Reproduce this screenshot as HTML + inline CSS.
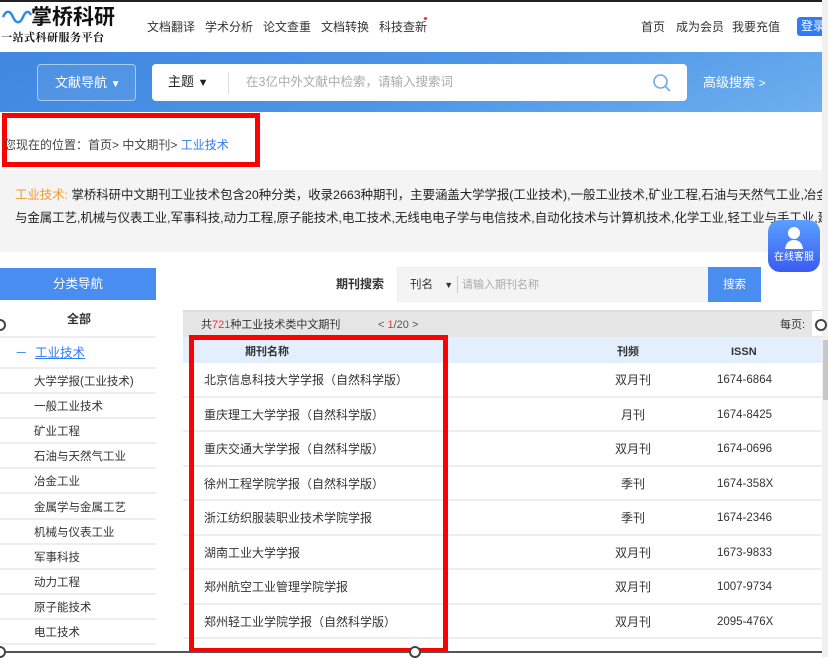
<!DOCTYPE html>
<html><head><meta charset="utf-8"><style>
*{margin:0;padding:0;box-sizing:border-box}
body{width:828px;height:657px;overflow:hidden;position:relative;background:#fff;font-family:"Liberation Sans","Noto Sans CJK SC",sans-serif;font-size:12px;color:#333;line-height:16px}
.a{position:absolute;white-space:nowrap}
.row{position:absolute;left:183px;width:645px;height:34.5px;border-bottom:2px solid #eee}
.row span{position:absolute;top:9px;line-height:16px}
.row .n{left:21px;font-size:12px}
.row .f{left:432px}
.row .i{left:534px;font-size:11.5px}
.sb{position:absolute;left:0;width:156px;height:25px;border-bottom:2px solid #eee}
.sb span{position:absolute;left:34px;top:5px;font-size:11.5px}
.circ{position:absolute;width:12px;height:12px;border:2px solid #444;border-radius:50%;background:#fff}
</style></head><body>
<div class="a" style="left:0;top:0;width:828px;height:2px;background:#222"></div>
<svg class="a" style="left:2px;top:8px" width="30" height="18" viewBox="0 0 30 18"><path d="M1 9c3-7 7-7 10 0s7 7 10 0 6-6 8-2" fill="none" stroke="#2c8be8" stroke-width="2.5"/></svg>
<div class="a" style="left:31px;top:6px;font-size:21px;line-height:24px;font-weight:bold;color:#111">掌桥科研</div>
<div class="a" style="left:1px;top:29px;font-size:11px;font-weight:bold;color:#111;font-family:'Noto Serif CJK SC',serif;letter-spacing:0.5px">一站式科研服务平台</div>
<div class="a" style="left:147px;top:19px">文档翻译</div>
<div class="a" style="left:205px;top:19px">学术分析</div>
<div class="a" style="left:263px;top:19px">论文查重</div>
<div class="a" style="left:321px;top:19px">文档转换</div>
<div class="a" style="left:379px;top:19px">科技查新</div>
<div class="a" style="left:424px;top:17px;width:3px;height:3px;background:#e33;border-radius:50%"></div>
<div class="a" style="left:641px;top:19px">首页</div>
<div class="a" style="left:676px;top:19px">成为会员</div>
<div class="a" style="left:732px;top:19px">我要充值</div>
<div class="a" style="left:797px;top:17px;width:31px;height:19px;background:#2f7cf6;border-radius:3px;color:#fff;padding:1px 0 0 4px">登录</div>
<div class="a" style="left:0;top:52px;width:828px;height:60px;background:linear-gradient(160deg,#3f87e0 0%,#4b94e6 50%,#6eb0ee 100%)"></div>
<div class="a" style="left:37px;top:64px;width:99px;height:37px;border:1px solid #a8ccf2;border-radius:4px;background:rgba(255,255,255,.08);color:#fff;font-size:13px;padding:10px 0 0 17px">文献导航 <span style="font-size:10px">▼</span></div>
<div class="a" style="left:152px;top:64px;width:535px;height:37px;background:#fff;border-radius:4px"></div>
<div class="a" style="left:168px;top:74px;font-size:13px;color:#222">主题 <span style="font-size:11px">▼</span></div>
<div class="a" style="left:228px;top:72px;width:1px;height:22px;background:#ddd"></div>
<div class="a" style="left:246px;top:74px;font-size:12.5px;color:#aaa">在3亿中外文献中检索，请输入搜索词</div>
<svg class="a" style="left:652px;top:73px" width="20" height="20" viewBox="0 0 20 20"><circle cx="8.5" cy="8.5" r="6.5" fill="none" stroke="#6ea8ee" stroke-width="1.6"/><path d="M13 13l5 5" stroke="#6ea8ee" stroke-width="1.6"/></svg>
<div class="a" style="left:703px;top:75px;font-size:13px;color:#fff">高级搜索 <span style="font-size:12px">&gt;</span></div>
<div class="a" style="left:2px;top:113px;width:258px;height:54px;border:5px solid #f00"></div>
<div class="a" style="left:4px;top:137px;font-size:12px;color:#444">您现在的位置：首页&gt; 中文期刊&gt; <span style="color:#2f7cf6">工业技术</span></div>
<div class="a" style="left:0;top:170px;width:828px;height:82px;background:#f4f4f4"></div>
<div class="a" style="left:15px;top:187px;font-size:12.4px;color:#222"><span style="color:#f29b2c">工业技术:</span> 掌桥科研中文期刊工业技术包含20种分类，收录2663种期刊，主要涵盖大学学报(工业技术),一般工业技术,矿业工程,石油与天然气工业,冶金</div>
<div class="a" style="left:15px;top:210px;font-size:12.4px;color:#222">与金属工艺,机械与仪表工业,军事科技,动力工程,原子能技术,电工技术,无线电电子学与电信技术,自动化技术与计算机技术,化学工业,轻工业与手工业,建筑</div>
<div class="a" style="left:768px;top:220px;width:52px;height:52px;border-radius:12px;background:linear-gradient(#5aa0ff,#3a5cf0);color:#fff;font-size:10px;text-align:center;padding-top:32px;line-height:12px">在线客服</div>
<svg class="a" style="left:783px;top:224px" width="22" height="26" viewBox="0 0 22 26"><circle cx="11" cy="9" r="6" fill="#fff"/><path d="M2 25c1-7 5-9 9-9s8 2 9 9z" fill="#fff"/></svg>
<div class="a" style="left:0;top:268px;width:156px;height:32px;background:#4a8df0;color:#fff;font-size:12.5px;text-align:center;padding-top:8px">分类导航</div>
<div class="a" style="left:67px;top:311px;font-weight:bold">全部</div>
<div class="a" style="left:0;top:336px;width:156px;height:2px;background:#eee"></div>
<div class="a" style="left:15px;top:345px;color:#2f7cf6;font-size:12.5px">－ <span style="text-decoration:underline;margin-left:4px">工业技术</span></div>
<div class="a" style="left:0;top:367px;width:156px;height:2px;background:#eee"></div>
<div class="sb" style="top:369px"><span>大学学报(工业技术)</span></div>
<div class="sb" style="top:394px"><span>一般工业技术</span></div>
<div class="sb" style="top:419px"><span>矿业工程</span></div>
<div class="sb" style="top:444px"><span>石油与天然气工业</span></div>
<div class="sb" style="top:469px"><span>冶金工业</span></div>
<div class="sb" style="top:495px"><span>金属学与金属工艺</span></div>
<div class="sb" style="top:520px"><span>机械与仪表工业</span></div>
<div class="sb" style="top:545px"><span>军事科技</span></div>
<div class="sb" style="top:570px"><span>动力工程</span></div>
<div class="sb" style="top:595px"><span>原子能技术</span></div>
<div class="sb" style="top:620px"><span>电工技术</span></div>
<div class="a" style="left:336px;top:276px;font-weight:bold">期刊搜索</div>
<div class="a" style="left:397px;top:267px;width:364px;height:35px;background:#f4f4f4;border:1px solid #eee"></div>
<div class="a" style="left:410px;top:277px;font-size:11.5px">刊名 <span style="font-size:9px;margin-left:8px">▼</span></div>
<div class="a" style="left:457px;top:276px;width:1px;height:17px;background:#ccc"></div>
<div class="a" style="left:462px;top:277px;font-size:11px;color:#aaa">请输入期刊名称</div>
<div class="a" style="left:708px;top:267px;width:53px;height:35px;background:#4a8df0;color:#fff;text-align:center;padding-top:10px;font-size:11.5px">搜索</div>
<div class="a" style="left:183px;top:310px;width:645px;height:27px;background:#e6e6e6;border-top:2px solid #ddd"></div>
<div class="a" style="left:201px;top:317px;font-size:11px">共<span style="color:#e33">721</span>种工业技术类中文期刊</div>
<div class="a" style="left:378px;top:317px;font-size:11px;color:#555">&lt; <span style="color:#e33">1</span>/20 &gt;</div>
<div class="a" style="left:780px;top:317px;font-size:11px">每页:</div>
<div class="a" style="left:812px;top:311px;width:16px;height:25px;background:#fff"></div>
<div class="a" style="left:183px;top:337px;width:645px;height:26px;background:#e3effc"></div>
<div class="a" style="left:245px;top:344px;font-weight:bold;font-size:11px">期刊名称</div>
<div class="a" style="left:617px;top:344px;font-weight:bold;font-size:11px">刊频</div>
<div class="a" style="left:731px;top:344px;font-weight:bold;font-size:11px">ISSN</div>
<div class="row" style="top:363px"><span class="n">北京信息科技大学学报（自然科学版）</span><span class="f">双月刊</span><span class="i">1674-6864</span></div>
<div class="row" style="top:397.5px"><span class="n">重庆理工大学学报（自然科学版）</span><span class="f" style="left:438px">月刊</span><span class="i">1674-8425</span></div>
<div class="row" style="top:432px"><span class="n">重庆交通大学学报（自然科学版）</span><span class="f">双月刊</span><span class="i">1674-0696</span></div>
<div class="row" style="top:466.5px"><span class="n">徐州工程学院学报（自然科学版）</span><span class="f" style="left:438px">季刊</span><span class="i">1674-358X</span></div>
<div class="row" style="top:501px"><span class="n">浙江纺织服装职业技术学院学报</span><span class="f" style="left:438px">季刊</span><span class="i">1674-2346</span></div>
<div class="row" style="top:535.5px"><span class="n">湖南工业大学学报</span><span class="f">双月刊</span><span class="i">1673-9833</span></div>
<div class="row" style="top:570px"><span class="n">郑州航空工业管理学院学报</span><span class="f">双月刊</span><span class="i">1007-9734</span></div>
<div class="row" style="top:604.5px"><span class="n">郑州轻工业学院学报（自然科学版）</span><span class="f">双月刊</span><span class="i">2095-476X</span></div>
<div class="a" style="left:189px;top:335px;width:259px;height:318px;border:5px solid #f00"></div>
<div class="a" style="left:0;top:653px;width:828px;height:4px;background:#fff"></div>
<div class="a" style="left:0;top:651px;width:828px;height:2px;background:#555"></div>
<div class="a" style="left:822px;top:0;width:6px;height:657px;background:#f0f0f0"></div>
<div class="a" style="left:823px;top:340px;width:5px;height:60px;background:#c8c8c8"></div>
<div class="circ" style="left:-6px;top:319px"></div>
<div class="circ" style="left:815px;top:319px"></div>
<div class="circ" style="left:-6px;top:646px"></div>
<div class="circ" style="left:409px;top:646px"></div>
</body></html>
